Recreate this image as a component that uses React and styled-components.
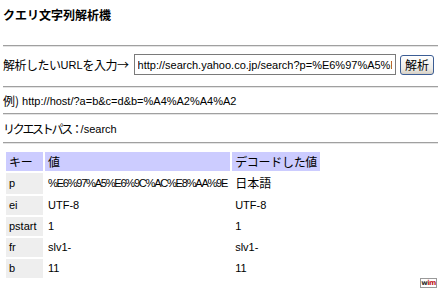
import React from "react"
import styled, { createGlobalStyle } from "styled-components"

const GlobalStyle = createGlobalStyle`
  body {
    margin: 0;
    background: #ffffff;
    color: #000000;
    font-family: "Liberation Sans", "Noto Sans CJK JP", sans-serif;
    font-size: 11px;
  }
`

const Page = styled.div`
  padding: 0 7px 0 3px;
`

// CJK runs are drawn a little larger than the Latin text, as in the original
const Jp = styled.span`
  font-family: "Noto Sans CJK JP", sans-serif;
  font-size: 12px;
  letter-spacing: ${(p) => p.$squeeze || 0}px;
`

const Title = styled.h1`
  font-family: "Noto Sans CJK JP", sans-serif;
  font-size: 12px;
  font-weight: bold;
  margin: 0 0 15px;
  height: 30px;
  line-height: 30px;
`

const Rule = styled.hr`
  border: 0;
  border-top: 1px solid #a0a0a0;
  border-bottom: 1px solid #e4e4e4;
  margin: 0;
  width: 435px;
`

const Row = styled.div`
  display: flex;
  align-items: center;
  height: ${(p) => p.$h || 24}px;
  padding: ${(p) => p.$pad || "0"};
  white-space: nowrap;
`

const UrlInput = styled.input`
  box-sizing: border-box;
  flex: 1;
  min-width: 0;
  height: 21px;
  margin: 0 4px 0 5px;
  padding: 0 3px;
  border: 1px solid #7a7a7a;
  font-family: "Liberation Sans", sans-serif;
  font-size: 11px;
  color: #000;
`

const Button = styled.button`
  height: 20px;
  padding: 0 4px;
  border: 1px solid #3c5d94;
  border-radius: 3px;
  background: linear-gradient(#ffffff, #ecebe6 70%, #d6d0c5);
  font-family: "Noto Sans CJK JP", sans-serif;
  font-size: 12px;
  color: #000;
  line-height: 16px;
`

const Table = styled.table`
  border-collapse: separate;
  border-spacing: 2px;
  margin: 6px 0 0 1px;
`

const Cell = styled.td`
  height: 19px;
  min-width: ${(p) => p.$min || 0}px;
  padding: 0 3px;
  line-height: 19px;
  white-space: nowrap;
  letter-spacing: ${(p) => (p.$encoded ? "-1.2px" : "normal")};
  background: ${(p) => p.$bg || "transparent"};
`

const Head = styled.th`
  height: 19px;
  padding: 0 3px;
  text-align: left;
  font-family: "Noto Sans CJK JP", sans-serif;
  font-size: 12px;
  font-weight: normal;
  line-height: 19px;
  letter-spacing: -0.3px;
  background: #ccccff;
  white-space: nowrap;
`

const Badge = styled.div`
  position: absolute;
  right: 4px;
  bottom: 3px;
  display: flex;
  align-items: center;
  justify-content: center;
  width: 15px;
  height: 8px;
  border: 1px solid #999;
  font-family: "DejaVu Sans", sans-serif;
  font-size: 7px;
  font-weight: bold;
  line-height: 7px;
  letter-spacing: -0.5px;
  span { color: #333; }
  b { color: #c0201a; }
`

const rows = [
  ["p", "%E6%97%A5%E6%9C%AC%E8%AA%9E", "日本語"],
  ["ei", "UTF-8", "UTF-8"],
  ["pstart", "1", "1"],
  ["fr", "slv1-", "slv1-"],
  ["b", "11", "11"],
]

export default function App() {
  return (
    <Page>
      <GlobalStyle />
      <Title>クエリ文字列解析機</Title>
      <Rule />
      <Row $h={21} $pad="7px 0 11px">
        <Jp $squeeze={-0.5}>解析したい</Jp>URL<Jp $squeeze={-0.5}>を入力→</Jp>
        <UrlInput readOnly value="http://search.yahoo.co.jp/search?p=%E6%97%A5%E6%9C%AC%E8%AA%9E&ei=UTF-8" />
        <Button>解析</Button>
      </Row>
      <Rule />
      <Row $h={25}>
        <Jp>例)</Jp>&nbsp;http://host/?a=b&c=d&b=%A4%A2%A4%A2
      </Row>
      <Rule />
      <Row $h={27}>
        <Jp $squeeze={-2.3}>リクエストパス：</Jp>/search
      </Row>
      <Rule />
      <Table>
        <thead>
          <tr>
            <Head>キー</Head>
            <Head>値</Head>
            <Head>デコードした値</Head>
          </tr>
        </thead>
        <tbody>
          {rows.map(([k, v, d]) => (
            <tr key={k}>
              <Cell $bg="#eeeeee" $min={31}>{k}</Cell>
              <Cell $encoded={v.includes("%")}>{v}</Cell>
              <Cell>{/[a-z0-9-]/i.test(d) ? d : <Jp>{d}</Jp>}</Cell>
            </tr>
          ))}
        </tbody>
      </Table>
      <Badge>
        <span>w</span>
        <b>im</b>
      </Badge>
    </Page>
  )
}
